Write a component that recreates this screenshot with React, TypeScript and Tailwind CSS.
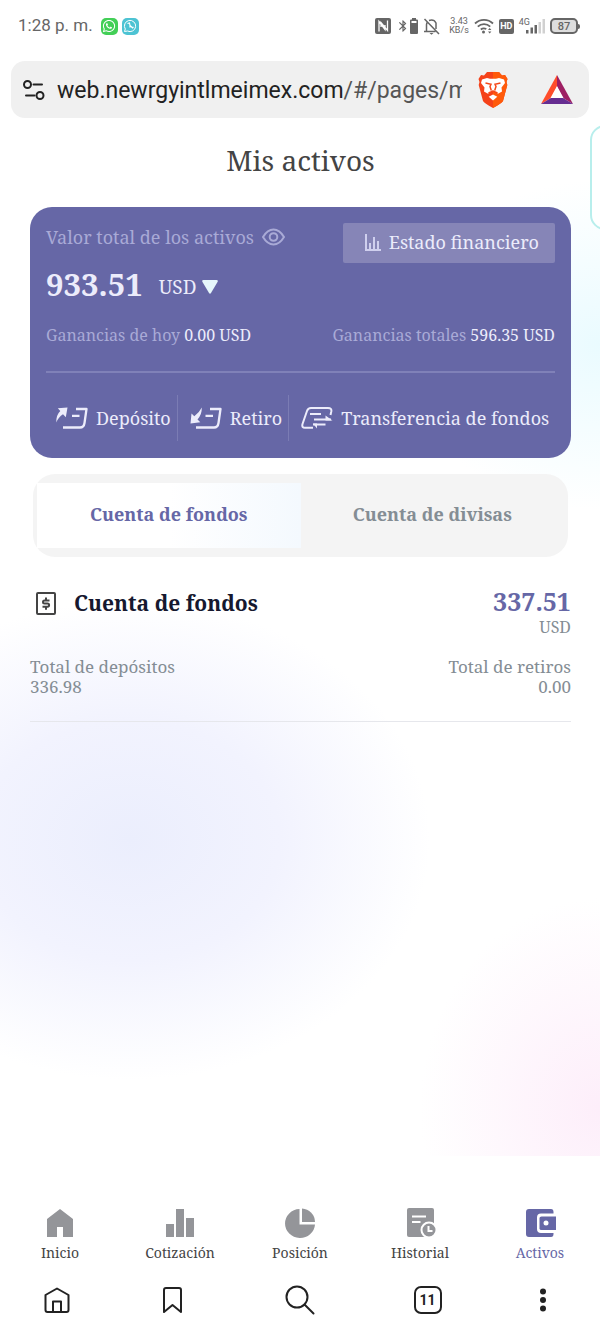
import { useState, type ReactNode } from 'react'
import { FaWhatsapp } from 'react-icons/fa'
import { MdBluetooth } from 'react-icons/md'

type Account = 'fondos' | 'divisas'

const accounts: { id: Account; label: string }[] = [
  { id: 'fondos', label: 'Cuenta de fondos' },
  { id: 'divisas', label: 'Cuenta de divisas' },
]

function StatusBar() {
  return (
    <div className="flex h-[50px] items-center justify-between pt-[2px] pr-5 pl-[18px] font-[Roboto,sans-serif] text-[#666]">
      <div className="flex items-center gap-1">
        <span className="mr-1 text-[17px]">1:28 p. m.</span>
        <span className="flex size-[17px] items-center justify-center rounded-[5px] bg-[#43cf57] text-white">
          <FaWhatsapp size={14} />
        </span>
        <span className="flex size-[17px] items-center justify-center rounded-[5px] bg-[#4dc3d3] text-white">
          <svg width="14" height="14" viewBox="0 0 14 14" fill="none" stroke="currentColor">
            <path d="M1.5 12.5 2.3 10A5.6 5.6 0 1 1 4.5 12Z" />
            <path d="M4.500 4.500 6.500 4l.5 2.500 2.500 2.300 1-1M7 6.500v2" strokeWidth="1.200" />
          </svg>
        </span>
      </div>
      <div className="flex items-center gap-[5px]">
        <svg width="16" height="16" viewBox="0 0 16 16">
          <rect width="16" height="16" rx="2" fill="currentColor" />
          <path d="M4 13.500V3.500l6 8V7M12.500 2.500v10L6 4.500V9" fill="none" stroke="#fff" strokeWidth="1.300" />
        </svg>
        <span className="flex items-center">
          <MdBluetooth size={14} />
          <svg width="8" height="16" viewBox="0 0 8 16">
            <path d="M2 0h4v1.500h1a1 1 0 0 1 1 1V15a1 1 0 0 1-1 1H1a1 1 0 0 1-1-1V2.500a1 1 0 0 1 1-1h1Z" fill="currentColor" />
            <path d="M1.500 3h5v2h-5z" fill="#fff" />
          </svg>
        </span>
        <svg width="17" height="17" viewBox="0 0 17 17" fill="none" stroke="currentColor" strokeWidth="1.500">
          <path d="M1 13.500h11.500M3.500 13V6.500q.2-1.500 1-2.500M6 2.500q5-1.500 7 2.500v6M1.500 1l14.500 15" />
          <path d="M6.500 15h4l-2 1.800Z" fill="currentColor" stroke="none" />
        </svg>
        <span className="ml-1 text-center text-[9px] leading-[9px]">
          3.43
          <br />
          KB/s
        </span>
        <svg width="20" height="16" viewBox="0 0 20 16" fill="none" stroke="currentColor" strokeWidth="1.800">
          <path d="M1 5.500a13 13 0 0 1 18 0M3.800 8.700a9 9 0 0 1 12.400 0M6.800 11.500a5 5 0 0 1 5.500-.5" />
          <circle cx="9.500" cy="14" r="1.500" fill="currentColor" stroke="none" />
          <path d="m14 12 1.700-2 1.700 2ZM14 13.500l1.700 2 1.700-2Z" fill="currentColor" stroke="none" />
        </svg>
        <span className="flex h-[15px] w-[15px] items-center justify-center rounded-xs bg-[#666] text-[9px] leading-none font-bold text-white">
          HD
        </span>
        <span className="flex items-start">
          <span className="text-[9px] leading-[9px]">4G</span>
          <svg width="19" height="16" viewBox="0 0 19 16" fill="currentColor" className="-ml-1">
            <path d="M0 12h2.500v3.500H0zM4.500 9.500H7v6H4.500zM8.500 7H11v8.500H8.500z" />
            <path d="M12.500 4H15v11.500h-2.500zM16.500 1H19v14.500h-2.500z" opacity=".3" />
          </svg>
        </span>
        <span className="flex items-center">
          <span className="flex h-4 w-[28px] items-center justify-center rounded-[5px] border-2 border-[#666] bg-[#ddd] text-[11px] leading-none font-medium">
            87
          </span>
          <span className="h-[5px] w-[2px] rounded-r bg-[#666]" />
        </span>
      </div>
    </div>
  )
}

function AddressBar() {
  return (
    <div className="mx-[11px] mt-[11px] flex h-[57px] items-center rounded-[14px] bg-[#f0f0f0] pr-4 pl-3">
      <button aria-label="Información del sitio" className="mr-3">
        <svg width="22" height="22" viewBox="0 0 22 22" fill="none" stroke="#222" strokeWidth="2" strokeLinecap="round">
          <circle cx="4.500" cy="5.500" r="3.500" />
          <path d="M10.500 5.500H19M3 16.500h8.500" />
          <circle cx="17" cy="16.500" r="3.500" />
        </svg>
      </button>
      <button className="min-w-0 flex-1 overflow-hidden pt-[2px] text-left font-[Roboto,sans-serif] text-[23px] leading-8 whitespace-nowrap text-[#222]">
        web.newrgyintlmeimex.com<span className="text-[#555]">/#/pages/m</span>
      </button>
      <button aria-label="Brave Shields" className="ml-4">
        <svg width="30" height="36" viewBox="0 0 30 36">
          <path d="m9 0-3 3.500-3-.5-2.500 4 1 3-.8 3L5 29q1 2 10 7 9-5 10-7l4.300-16-.8-3 1-3L27 3l-3 .5L21 0Z" fill="#f5421a" />
          <path d="M15 0h6l3 3.500 3-.5 2.500 4-1 3 .8 3L25 29q-1 2-10 7Z" fill="#ff5a0a" />
          <path d="m4 7.500 5-1.500 3 .8h6l3-.8 5 1.500 1 3.500-3.500 4.500.5 4-4 2.200-5-3.200-5 3.200-4-2.200.5-4L3 11Z" fill="#fff" />
          <path d="m7.500 11 5.500 1.200-1 2.300 1.300 4M22.500 11 17 12.200l1 2.300-1.300 4M10.500 21l4.500-2 4.500 2" fill="none" stroke="#f5481a" strokeWidth="1.500" />
          <path d="m15 22.500 4.300 2.200L15 28.500l-4.300-3.800Z" fill="#fff" />
        </svg>
      </button>
      <button aria-label="Brave Rewards" className="ml-[33px]">
        <svg width="32" height="30" viewBox="0 0 32 30">
          <path d="M16 0 0 29l10-6 6-11Z" fill="#ff4d2b" />
          <path d="m16 0 16 29-10-6-6-11Z" fill="#9e1f63" />
          <path d="M0 29h32l-10-6H10Z" fill="#662d91" />
          <path d="m16 11 6.500 12h-13Z" fill="#fff" />
        </svg>
      </button>
    </div>
  )
}

function DepositIcon() {
  return (
    <svg width="32" height="24" viewBox="0 0 32 24" fill="none" stroke="currentColor" strokeWidth="2.300" strokeLinejoin="round">
      <path d="M20 3h10.500l-2 14q-.6 4.500-4.500 4.500H7M16 9.800h7.500" />
      <path d="M11.500 1.500 1.800 2.300l2.500 2.700Q0 9 .3 16.500 2.500 11 7 8.300l2.800 2.900Z" fill="currentColor" stroke="none" />
    </svg>
  )
}

function WithdrawIcon() {
  return (
    <svg width="32" height="24" viewBox="0 0 32 24" fill="none" stroke="currentColor" strokeWidth="2.300" strokeLinejoin="round">
      <path d="M20 3h10.500l-2 14q-.6 4.500-4.500 4.500H6M15.500 9.800H23" />
      <path d="M.5 17.500 1.500 7.500l2.800 2.700Q9 7 11.800 1.500q.2 7-4.300 12l2.800 2.800Z" fill="currentColor" stroke="none" />
    </svg>
  )
}

function TransferIcon() {
  return (
    <svg width="32" height="24" viewBox="0 0 32 24" fill="none" stroke="currentColor" strokeWidth="2" strokeLinejoin="round">
      <path d="M12 21.800H4Q.5 21.800 1.500 18L6 5q1-3 4-3h17q4 0 3.300 3.500L29.500 9M9 8h11M13 13.500h17M12 18.500h12.500" />
      <path d="m24.500 9.500 7 5h-7ZM12 17.500l4 5v-5Z" fill="currentColor" stroke="none" />
    </svg>
  )
}

function Action({ icon, label }: { icon: ReactNode; label: string }) {
  return (
    <button className="flex h-[46px] items-center gap-2 text-[18px] whitespace-nowrap">
      {icon}
      {label}
    </button>
  )
}

function BalanceCard() {
  return (
    <section className="rounded-[22px] bg-[#6667a6] px-4 pt-4 pb-[17px] text-[#ececfb]">
      <div className="flex h-10 items-start justify-between">
        <div className="flex items-center gap-2 text-[18px] leading-7 text-[#a9aad6]">
          Valor total de los activos
          <button aria-label="Ocultar saldo">
            <svg width="23" height="18" viewBox="0 0 23 18" fill="none" stroke="currentColor" strokeWidth="2">
              <path d="M1 9q4.500-7.500 10.500-7.500T22 9q-4.500 7.500-10.500 7.500T1 9Z" />
              <circle cx="11.500" cy="9" r="3.800" />
            </svg>
          </button>
        </div>
        <button className="flex h-10 items-center gap-2 rounded-xs bg-[#8685b7] pr-4 pb-[2px] pl-[22px] text-[18px]">
          <svg width="16" height="17" viewBox="0 0 16 17" fill="none" stroke="#cfcfee" strokeWidth="2">
            <path d="M1 0v16h15M5 9v6M9 3v12M13 7v8" />
          </svg>
          Estado financiero
        </button>
      </div>

      <div className="flex h-11 items-center gap-4">
        <span className="pb-[2px] text-[31px] font-bold">933.51</span>
        <button className="flex items-center gap-[6px] pt-1 text-[19px]">
          USD
          <svg width="16" height="14" viewBox="0 0 16 14">
            <path d="M1.500 0h13q2 0 1 2L9 13q-1 1.500-2 0L.5 2q-1-2 1-2Z" fill="#e6f7fb" />
          </svg>
        </button>
      </div>

      <div className="mt-4 flex h-6 items-center justify-between text-[16px] text-[#a9aad6]">
        <p>
          Ganancias de hoy <span className="text-[#ececfb]">0.00 USD</span>
        </p>
        <p>
          Ganancias totales <span className="text-[#ececfb]">596.35 USD</span>
        </p>
      </div>

      <hr className="mt-6 border-t-2 border-[#8081b8]" />

      <div className="mt-[22px] flex items-center pr-[2px] pl-[10px]">
        <Action icon={<DepositIcon />} label="Depósito" />
        <span className="mr-3 ml-[6px] h-[46px] w-px bg-[#7b7cb4]" />
        <Action icon={<WithdrawIcon />} label="Retiro" />
        <span className="mr-3 ml-[6px] h-[46px] w-px bg-[#7b7cb4]" />
        <Action icon={<TransferIcon />} label="Transferencia de fondos" />
      </div>
    </section>
  )
}

function NavItem({ label, active, children }: { label: string; active?: boolean; children: ReactNode }) {
  return (
    <a
      href="#"
      aria-current={active ? 'page' : undefined}
      className={`flex flex-1 flex-col items-center gap-1 text-[14px] leading-5 ${active ? 'text-[#6667a6]' : 'text-[#444]'}`}
    >
      <svg
        width="32"
        height="32"
        viewBox="0 0 32 32"
        className={active ? 'fill-[#6667a6]' : 'fill-[#949599]'}
      >
        {children}
      </svg>
      {label}
    </a>
  )
}

export default function App() {
  const [account, setAccount] = useState<Account>('fondos')

  return (
    <div className="flex min-h-screen flex-col overflow-hidden bg-white font-['Noto_Serif','DejaVu_Serif_Condensed','DejaVu_Serif',serif]">
      <header>
        <StatusBar />
        <AddressBar />
      </header>

      <main className="relative flex-1 bg-[radial-gradient(ellipse_200px_165px_at_100%_227px,#eafbff,transparent),radial-gradient(ellipse_300px_240px_at_130px_722px,#ebeefd,#f2f3fe_50%,transparent),radial-gradient(ellipse_180px_210px_at_100%_990px,#fdeefa,transparent)] pr-[29px] pl-[30px]">
        {/* floating handle peeking from the edge */}
        <div className="absolute top-[7px] -right-5 h-[105px] w-[30px] rounded-[16px] border-2 border-[#b8eeec] bg-white" />

        <h1 className="pt-5 text-center text-[28px] leading-[44px] text-[#444]">Mis activos</h1>

        <div className="mt-[25px]">
          <BalanceCard />
        </div>

        <div role="tablist" className="mx-[3px] mt-4 flex h-[83px] rounded-[22px] bg-[#f4f4f4] px-1 py-[9px]">
          {accounts.map((a) => (
            <button
              key={a.id}
              role="tab"
              aria-selected={account === a.id}
              onClick={() => setAccount(a.id)}
              className={`flex-1 pb-[3px] text-[18px] font-bold ${
                account === a.id
                  ? 'bg-linear-to-r from-white from-50% to-[#f4f9fe] text-[#6667a6]'
                  : 'text-[#848d94]'
              }`}
            >
              {a.label}
            </button>
          ))}
        </div>

        <section className="mt-7 border-b border-[#e6e7ec] pb-6">
          <div className="flex items-start justify-between">
            <h2 className="flex items-center gap-[18px] pl-[6px] text-[21px] leading-9 font-bold text-[#16182f]">
              <svg width="20" height="23" viewBox="0 0 20 23" fill="none" stroke="#444" strokeWidth="2">
                <rect x="1" y="1" width="18" height="21" rx="1" />
                <path d="M13.500 8.500H8.500a1.500 1.500 0 0 0 0 3h3a1.600 1.600 0 0 1 0 3.200H6.500M10 5.500v3M10 14.500v3.200" />
              </svg>
              Cuenta de fondos
            </h2>
            <div className="text-right">
              <p className="text-[25px] leading-8 font-bold text-[#6667a6]">337.51</p>
              <p className="text-[16px] leading-5 text-[#848d94]">USD</p>
            </div>
          </div>
          <dl className="mt-5 flex justify-between text-[17px] leading-5 text-[#848d94]">
            <div>
              <dt>Total de depósitos</dt>
              <dd>336.98</dd>
            </div>
            <div className="text-right">
              <dt>Total de retiros</dt>
              <dd>0.00</dd>
            </div>
          </dl>
        </section>
      </main>

      <nav className="flex bg-white pt-[51px] pb-1">
        <NavItem label="Inicio">
          <path d="M16 2 29 12v18H19V20h-6v10H3V12Z" />
        </NavItem>
        <NavItem label="Cotización">
          <path d="M2 17h8v13H2zM12 2h8v28h-8zM22 11h8v19h-8z" />
        </NavItem>
        <NavItem label="Posición">
          <path d="M15.500 2v15.500H31A15 14.500 0 1 1 15.500 2Z" />
          <path d="M18 1.500A14 13.500 0 0 1 31 15H18Z" />
        </NavItem>
        <NavItem label="Historial">
          <rect x="3" y="1" width="27" height="29" rx="2" />
          <path d="M8 9.500h14M8 15h8.500" className="stroke-white" strokeWidth="2" />
          <circle cx="25" cy="23" r="7.500" className="stroke-white" strokeWidth="2" />
          <path d="M24.500 19v5h4" fill="none" className="stroke-white" strokeWidth="2" />
        </NavItem>
        <NavItem label="Activos" active>
          <path d="M5 2h22q2.500 0 2.500 3v1.500H17q-4 0-4 4v11.500q0 4 4 4h12.500v1q0 3-2.500 3H5q-3 0-3-3V5q0-3 3-3Z" />
          <path d="M17.500 9.500H32V23H17.500q-2 0-2-1.500V11q0-1.500 2-1.500Z" />
          <circle cx="22" cy="16" r="2.500" className="fill-white" />
        </NavItem>
      </nav>

      <div className="flex h-[66px] items-center justify-between bg-white px-[41px] text-[#222]">
        <button aria-label="Página principal" className="flex w-8 justify-center">
          <svg width="26" height="26" viewBox="0 0 26 26" fill="none" stroke="currentColor" strokeWidth="2" strokeLinejoin="round">
            <path d="M13 1.500 24.500 8v15q0 2-2 2h-19q-2 0-2-2V8ZM9 25V14.500h8V25" />
          </svg>
        </button>
        <button aria-label="Marcadores" className="flex w-8 justify-center">
          <svg width="19" height="26" viewBox="0 0 19 26" fill="none" stroke="currentColor" strokeWidth="2" strokeLinejoin="round">
            <path d="M1 3q0-2 2-2h13q2 0 2 2v22l-8.500-7L1 25Z" />
          </svg>
        </button>
        <button aria-label="Buscar" className="flex w-14 justify-center">
          <svg width="30" height="30" viewBox="0 0 30 30" fill="none" stroke="currentColor" strokeWidth="2" strokeLinecap="round">
            <circle cx="12" cy="12" r="10.500" />
            <path d="m19.500 19.500 9 9" />
          </svg>
        </button>
        <button aria-label="Pestañas" className="flex w-8 justify-center">
          <span className="flex size-7 items-center justify-center rounded-[7px] border-2 border-current font-[Roboto,sans-serif] text-[14px] leading-none font-bold">
            11
          </span>
        </button>
        <button aria-label="Más opciones" className="flex w-8 justify-center">
          <svg width="8" height="24" viewBox="0 0 8 24" fill="currentColor">
            <circle cx="4" cy="3.500" r="3" />
            <circle cx="4" cy="12" r="3" />
            <circle cx="4" cy="20.500" r="3" />
          </svg>
        </button>
      </div>
    </div>
  )
}
